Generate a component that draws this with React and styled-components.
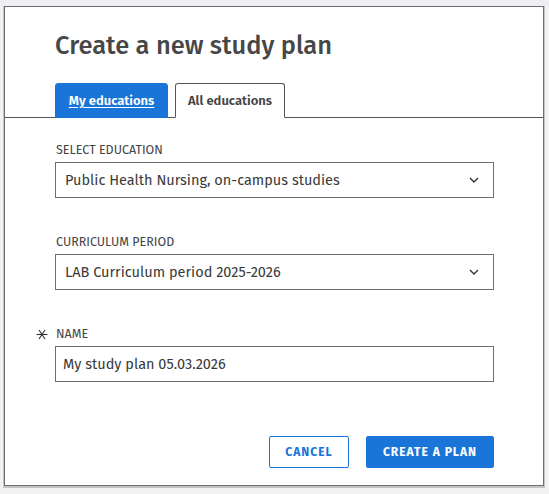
import React from "react";
import styled, { createGlobalStyle } from "styled-components";

const GlobalStyle = createGlobalStyle`
  body {
    margin: 0;
    background: #f1f1f3;
    font-family: "Fira Sans", Roboto, "Liberation Sans", sans-serif;
  }
`;

const Page = styled.div`
  height: 494px;
  padding: 6px 0 0 4px;
  box-sizing: border-box;
  background: linear-gradient(#efeef3 0, #efeef3 6px, #f2f2f2 6px);
`;

const Dialog = styled.div`
  width: 540px;
  height: 480px;
  box-sizing: border-box;
  background: #fff;
  border: 1px solid #6e6e6e;
  box-shadow: 0 1px 0 1px #c4c4c4;
  display: flex;
  flex-direction: column;
`;

const Header = styled.div`
  padding: 23px 0 0 50px;
  border-bottom: 1px solid #555;
`;

const Title = styled.h1`
  margin: 0 0 21px;
  font-size: 25.5px;
  line-height: 32px;
  font-weight: 500;
  color: #474747;
`;

const Tabs = styled.div`
  display: flex;
  gap: 7px;
`;

const Tab = styled.button`
  height: 35px;
  width: ${(p) => p.$width}px;
  box-sizing: border-box;
  margin: 0 0 -1px;
  padding: 0;
  font-family: inherit;
  font-size: 13px;
  font-weight: 600;
  border-radius: 3px 3px 0 0;
  cursor: pointer;
  background: ${(p) => (p.$active ? "#1976d8" : "#fff")};
  color: ${(p) => (p.$active ? "#fff" : "#444")};
  border: 1px solid ${(p) => (p.$active ? "#1976d8" : "#555")};
  border-bottom: ${(p) => (p.$active ? "1px solid #1976d8" : "1px solid #fff")};
  text-decoration: ${(p) => (p.$active ? "underline" : "none")};
  text-underline-offset: 2px;
`;

const Body = styled.div`
  flex: 1;
  padding: 24px 49px 0 50px;
  display: flex;
  flex-direction: column;
  gap: 36px;
`;

const Field = styled.div`
  display: flex;
  flex-direction: column;
  gap: 4px;
`;

const Label = styled.label`
  position: relative;
  font-size: 12.5px;
  line-height: 16px;
  color: #444;
  text-transform: uppercase;
  padding-left: 1px;
`;

const Required = styled.svg`
  position: absolute;
  left: -19px;
  top: 3px;
`;

const SelectBox = styled.div`
  height: 36px;
  box-sizing: border-box;
  border: 1px solid #6e6e6e;
  display: flex;
  align-items: center;
  justify-content: space-between;
  padding: 0 14px 0 9px;
  font-size: 14.5px;
  color: #3a3a3a;
`;

const TextInput = styled.input`
  height: 36px;
  box-sizing: border-box;
  border: 1px solid #6e6e6e;
  padding: 0 7px;
  font-family: inherit;
  font-size: 14.5px;
  color: #3a3a3a;
  outline: none;
`;

const Footer = styled.div`
  display: flex;
  justify-content: flex-end;
  gap: 17px;
  padding: 0 49px 17px 0;
`;

const Button = styled.button`
  height: 32px;
  width: ${(p) => p.$width}px;
  box-sizing: border-box;
  font-family: inherit;
  font-size: 12px;
  font-weight: 700;
  letter-spacing: 1px;
  text-transform: uppercase;
  border-radius: 2px;
  cursor: pointer;
  border: 1px solid #1976d8;
  background: ${(p) => (p.$primary ? "#1976d8" : "#fff")};
  color: ${(p) => (p.$primary ? "#fff" : "#1976d8")};
`;

const Chevron = () => (
  <svg width="10" height="6" viewBox="0 0 10 6">
    <polyline points="1,1 5,5 9,1" fill="none" stroke="#333" strokeWidth="1.4" />
  </svg>
);

const Select = ({ value }) => (
  <SelectBox>
    <span>{value}</span>
    <Chevron />
  </SelectBox>
);

const App = () => {
  return (
    <Page>
      <GlobalStyle />
      <Dialog>
        <Header>
          <Title>Create a new study plan</Title>
          <Tabs>
            <Tab $active $width={113}>My educations</Tab>
            <Tab $width={110}>All educations</Tab>
          </Tabs>
        </Header>
        <Body>
          <Field>
            <Label>Select education</Label>
            <Select value="Public Health Nursing, on-campus studies" />
          </Field>
          <Field>
            <Label>Curriculum period</Label>
            <Select value="LAB Curriculum period 2025-2026" />
          </Field>
          <Field>
            <Label>
              <Required width="12" height="11" viewBox="0 0 12 11">
                <g stroke="#333" strokeWidth="1.1">
                  <line x1="0.5" y1="5.5" x2="11.5" y2="5.5" />
                  <line x1="3" y1="1" x2="9" y2="10" />
                  <line x1="9" y1="1" x2="3" y2="10" />
                </g>
              </Required>
              Name
            </Label>
            <TextInput defaultValue="My study plan 05.03.2026" />
          </Field>
        </Body>
        <Footer>
          <Button $width={80}>Cancel</Button>
          <Button $primary $width={128}>Create a plan</Button>
        </Footer>
      </Dialog>
    </Page>
  );
};

export default App;
